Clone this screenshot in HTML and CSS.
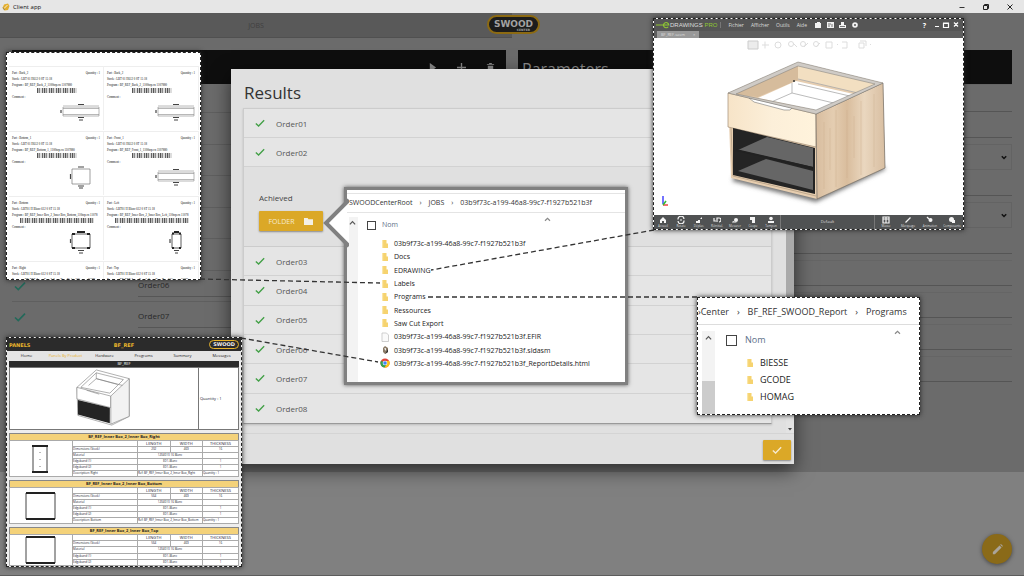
FILE: index.html
```html
<!DOCTYPE html>
<html lang="en">
<head>
<meta charset="utf-8">
<title>Client app</title>
<link rel="stylesheet" href="styles.css">
</head>
<body>
<svg class="sprite" aria-hidden="true">
  <symbol id="tick" viewBox="0 0 12 12"><path d="M1 6.500 4.300 9.600 11 2.600" fill="none" stroke="currentColor" stroke-width="1.600"/></symbol>
  <symbol id="folder" viewBox="0 0 8 10"><path d="M1 1h4.500v3.500H7V9H1z" fill="#f6d36f"/><path d="M1 1h1.200v8H1z" fill="#fbe6a6"/></symbol>
  <symbol id="up" viewBox="0 0 8 6"><path d="M1 4.500 4 1.500 7 4.500" fill="none" stroke="currentColor" stroke-width="1.400"/></symbol>
  <symbol id="wide" viewBox="0 0 40 20"><path d="M3 5h36v9H3zM3 6.500h36M3 12.500h36" fill="none" stroke="#888" stroke-width=".6"/><path d="M18 2.500h6M18 15.500h6M19 18h4M1 8v3" stroke="#444" stroke-width="1.200"/><path d="M3 3.500h36" stroke="#aaa" stroke-width=".4"/></symbol>
  <symbol id="square" viewBox="0 0 40 24"><path d="M12 4h18v15H12z" fill="none" stroke="#777" stroke-width=".7"/><path d="M18 2h6M18 21h6M19 23h4M10.500 9v5" stroke="#444" stroke-width="1.200"/></symbol>
  <symbol id="box" viewBox="0 0 40 24"><path d="M12 4h18v14H12z" fill="none" stroke="#333" stroke-width=".8"/><path d="M12 4h3M27 4h3M12 18h3M27 18h3M17 2h8" stroke="#222" stroke-width="1.800"/><path d="M18 20.500h6M19 23h4M10.500 9v4" stroke="#444" stroke-width="1.200"/></symbol>
  <symbol id="narrow" viewBox="0 0 40 24"><path d="M17 4h9v14h-9z" fill="none" stroke="#333" stroke-width=".8"/><path d="M17 3.500h2M24 3.500h2M17 18h2M24 18h2M19 2h5" stroke="#222" stroke-width="1.800"/><path d="M19 20.500h5M20 23h3M15 9v4" stroke="#444" stroke-width="1.200"/></symbol>
</svg>

<div class="desktop">
  <header class="titlebar">
    <svg class="app-icon" viewBox="0 0 8 8"><path d="M2 1.500 6 .5 7.500 3 6 7 2.500 7.500.5 5z" fill="#e3ae2d"/><path d="M2 5.500 5.500 2" stroke="#fff" stroke-width=".8"/><path d="M1 4.500 2.500 7" stroke="#665" stroke-width=".6"/></svg>
    <span class="app-name">Client app</span>
    <button class="win-btn" aria-label="Minimize"><svg viewBox="0 0 8 8"><path d="M1.500 4.500h5" stroke="#333"/></svg></button>
    <button class="win-btn" aria-label="Restore"><svg viewBox="0 0 8 8"><path d="M1.500 2.500h4v4h-4zM2.500 2.500v-1h4v4h-1" fill="none" stroke="#222"/></svg></button>
    <button class="win-btn" aria-label="Close"><svg viewBox="0 0 8 8"><path d="M1.500 1.500l5 5M6.500 1.500l-5 5" stroke="#222"/></svg></button>
  </header>

  <main class="app">
    <nav class="topbar">
      <div class="topbar-left"><a class="jobs" href="#jobs">JOBS</a></div>
      <div class="logo">SWOOD<small>CENTER</small></div>
    </nav>
    <div class="columns">
      <section class="pane">
        <div class="pane-head tools">
          <button aria-label="Run"><svg viewBox="0 0 10 10"><path d="M2 0v10l7-5z" fill="currentColor"/></svg></button>
          <button aria-label="Add"><svg viewBox="0 0 10 10"><path d="M5 0v10M0 5h10" stroke="currentColor" stroke-width="1.500"/></svg></button>
          <button aria-label="Delete"><svg viewBox="0 0 10 10"><path d="M1 1h2.500V0h3v1H9v1H1zM2 3h6v7H2z" fill="currentColor"/></svg></button>
        </div>
        <ul class="back-rows">
          <li></li><li></li><li></li><li></li><li></li>
          <li><svg class="tick"><use href="#tick"/></svg><span>Order06</span></li>
          <li><svg class="tick"><use href="#tick"/></svg><span>Order07</span></li>
        </ul>
      </section>
      <section class="pane">
        <div class="pane-head"><h2>Parameters</h2></div>
        <div class="fields">
          <input aria-label="Name"><input aria-label="Reference">
          <select aria-label="Type"></select><input aria-label="Length">
          <select aria-label="Machine"></select><input aria-label="Width">
          <input aria-label="Height"><input aria-label="Depth"><input aria-label="Stock"><input aria-label="Output">
        </div>
      </section>
    </div>
    <button class="edit" aria-label="Edit"><svg viewBox="0 0 14 14"><path d="M2 12v-2.200L9.200 2.600l2.200 2.200L4.200 12zM9.900 1.900l.8-.8 2.200 2.200-.8.8z" fill="currentColor"/></svg></button>
  </main>

  <section class="dialog" role="dialog" aria-labelledby="results">
    <h1 id="results">Results</h1>
    <div class="dialog-body">
      <div class="orders">
        <div class="order"><svg class="tick"><use href="#tick"/></svg>Order01</div>
        <div class="order"><svg class="tick"><use href="#tick"/></svg>Order02</div>
        <div class="detail">
          <p>Achieved</p>
          <button class="gold">FOLDER<svg viewBox="0 0 12 10"><path d="M1 1h4l1 1.500h5V9H1z" fill="#f4f0e4"/></svg></button>
        </div>
        <div class="order-group">
          <div class="order"><svg class="tick"><use href="#tick"/></svg>Order03</div>
          <div class="order"><svg class="tick"><use href="#tick"/></svg>Order04</div>
          <div class="order"><svg class="tick"><use href="#tick"/></svg>Order05</div>
          <div class="order"><svg class="tick"><use href="#tick"/></svg>Order06</div>
          <div class="order"><svg class="tick"><use href="#tick"/></svg>Order07</div>
          <div class="order"><svg class="tick"><use href="#tick"/></svg>Order08</div>
        </div>
      </div>
      <div class="scroll"><i></i><svg viewBox="0 0 6 4"><path d="M1 1h4L3 3.500z" fill="#444"/></svg></div>
    </div>
    <footer><button class="gold ok" aria-label="OK"><svg class="tick"><use href="#tick"/></svg></button></footer>
  </section>

  <section class="window labels">
    <article class="label"><p>Part : Back_2<b>Quantity : 1</b></p><p>Stock : LBT 01 H612 0 ST 15 18</p><p>Program : BF_REF_Back_2_1100top.cn 1107880</p><i class="bars"></i><p>Comment :</p><svg class="wide"><use href="#wide"/></svg></article>
    <article class="label"><p>Part : Back_2<b>Quantity : 1</b></p><p>Stock : LBT 01 H612 0 ST 15 18</p><p>Program : BF_REF_Back_2_1100top.cn 1107880</p><i class="bars"></i><p>Comment :</p><svg class="wide"><use href="#wide"/></svg></article>
    <article class="label"><p>Part : Bottom_1<b>Quantity : 1</b></p><p>Stock : LBT 01 H612 0 ST 15 18</p><p>Program : BF_REF_Bottom_1_1100top.cn 1107880</p><i class="bars"></i><p>Comment :</p><svg><use href="#square"/></svg></article>
    <article class="label"><p>Part : Front_1<b>Quantity : 1</b></p><p>Stock : LBT 01 H612 0 ST 15 18</p><p>Program : BF_REF_Front_1_1100top.cn 1107880</p><i class="bars"></i><p>Comment :</p><svg class="wide"><use href="#wide"/></svg></article>
    <article class="label"><p>Part : Bottom<b>Quantity : 1</b></p><p>Stock : LBT01 H Blanc 612 0 ST 15 18</p><p>Program : BF_REF_Inner Box_2_Inner Box_Bottom_110top.cn 11078</p><i class="bars long"></i><p>Comment :</p><svg><use href="#box"/></svg></article>
    <article class="label"><p>Part : Left<b>Quantity : 1</b></p><p>Stock : LBT01 H Blanc 612 0 ST 15 18</p><p>Program : BF_REF_Inner Box_2_Inner Box_Left_110top.cn 11078</p><i class="bars long"></i><p>Comment :</p><svg><use href="#narrow"/></svg></article>
    <article class="label"><p>Part : Right<b>Quantity : 1</b></p><p>Stock : LBT01 H Blanc 612 0 ST 15 18</p><p>Program : BF_REF_Inner Box_2_Inner Box_Right_110top.cn 11078</p></article>
    <article class="label"><p>Part : Top<b>Quantity : 1</b></p><p>Stock : LBT01 H Blanc 612 0 ST 15 18</p><p>Program : BF_REF_Inner Box_2_Inner Box_Top_110top.cn 11078</p></article>
  </section>

  <section class="window report">
    <header><span>PANELS</span><b>BF_REF</b><em>SWOOD</em></header>
    <nav><a href="#home">Home</a><a class="on" href="#panels">Panels By Product</a><a href="#hardware">Hardware</a><a href="#programs">Programs</a><a href="#summary">Summary</a><a href="#messages">Messages</a></nav>
    <h3>BF_REF</h3>
    <div class="hero">
      <svg viewBox="0 0 60 62"><g fill="#fff" stroke="#777" stroke-width=".6"><path d="M2 20 22 2 56 11v39L38 59 3 49z"/><path d="M2 20 37 29v12L2 32z"/><path d="M37 29 56 11v39L37 58z" fill="#f2f2f2"/><path d="M6 20 22 5 50 12 36 26z"/><path d="M14 18l8-7 22 6M22 5v6l27 7M12 23l13 4" fill="none"/></g><path d="M3 33 36 41v16L3 48z" fill="#242424"/></svg>
      <p>Quantity : 1</p>
    </div>
    <table><caption>BF_REF_Inner Box_2_Inner Box_Right</caption>
      <tr><td class="pic" rowspan="6"><svg viewBox="0 0 32 30"><path d="M8 2h14v26H8z" fill="#fff" stroke="#444"/><path d="M7 2h16M7 28h16" stroke="#222" stroke-width="2"/><path d="M15 8v1M15 15v1M15 22v1" stroke="#777"/></svg></td><td></td><th>LENGTH</th><th>WIDTH</th><th>THICKNESS</th></tr>
      <tr><td>Dimensions (Stock)</td><td class="c">202</td><td class="c">469</td><td class="c">16</td></tr>
      <tr><td>Material</td><td class="c" colspan="2">1204010 16 Blanc</td><td></td></tr>
      <tr><td>Edgeband (1)</td><td class="c" colspan="2">ED1-Blanc</td><td class="c">1</td></tr>
      <tr><td>Edgeband (2)</td><td class="c" colspan="2">ED1-Blanc</td><td class="c">1</td></tr>
      <tr><td>Description: Right</td><td colspan="2">Ref: BF_REF_Inner Box_2_Inner Box_Right</td><td>Quantity : 1</td></tr>
    </table>
    <table><caption>BF_REF_Inner Box_2_Inner Box_Bottom</caption>
      <tr><td class="pic" rowspan="6"><svg viewBox="0 0 32 30"><path d="M1 2h29v26H1z" fill="#fff" stroke="#444"/><path d="M1 2h29M1 28h29" stroke="#222" stroke-width="2"/></svg></td><td></td><th>LENGTH</th><th>WIDTH</th><th>THICKNESS</th></tr>
      <tr><td>Dimensions (Stock)</td><td class="c">564</td><td class="c">469</td><td class="c">16</td></tr>
      <tr><td>Material</td><td class="c" colspan="2">1204010 16 Blanc</td><td></td></tr>
      <tr><td>Edgeband (1)</td><td class="c" colspan="2">ED1-Blanc</td><td class="c">1</td></tr>
      <tr><td>Edgeband (2)</td><td class="c" colspan="2">ED1-Blanc</td><td class="c">1</td></tr>
      <tr><td>Description: Bottom</td><td colspan="2">Ref: BF_REF_Inner Box_2_Inner Box_Bottom</td><td>Quantity : 1</td></tr>
    </table>
    <table><caption>BF_REF_Inner Box_2_Inner Box_Top</caption>
      <tr><td class="pic" rowspan="5"><svg viewBox="0 0 32 30"><path d="M1 2h29v26H1z" fill="#fff" stroke="#444"/><path d="M1 2h29M1 28h29" stroke="#222" stroke-width="2"/></svg></td><td></td><th>LENGTH</th><th>WIDTH</th><th>THICKNESS</th></tr>
      <tr><td>Dimensions (Stock)</td><td class="c">564</td><td class="c">469</td><td class="c">16</td></tr>
      <tr><td>Material</td><td class="c" colspan="2">1204010 16 Blanc</td><td></td></tr>
      <tr><td>Edgeband (1)</td><td class="c" colspan="2">ED1-Blanc</td><td class="c">1</td></tr>
      <tr><td>Edgeband (2)</td><td class="c" colspan="2">ED1-Blanc</td><td class="c">1</td></tr>
    </table>
  </section>

  <section class="window drawing">
    <header>
      <svg class="mark" viewBox="0 0 16 8"><path d="M0 4h9M14 6a3 3 0 1 1 .6-2H9" fill="none" stroke="#8fc832" stroke-width="1.300"/></svg>
      <span class="brand">DRAWINGS <b>PRO</b></span>
      <a href="#fichier">Fichier</a><a href="#afficher">Afficher</a><a href="#outils">Outils</a><a href="#aide">Aide</a>
      <svg class="quick" viewBox="0 0 48 8"><g fill="#f2f2f2"><path d="M1 2h2V1h3v1h1v5H1z"/><path d="M13 1h7v6h-7z"/><path d="M27 1h3v3h2v3h-7V4h2z"/><circle cx="41" cy="4" r="2.800"/></g><path d="M14 3h3M14 5h2M18 3v3M26 5.500h5" stroke="#555" stroke-width=".8"/><circle cx="41" cy="4" r="1" fill="#555"/></svg>
      <span class="help">?</span>
      <svg class="controls" viewBox="0 0 28 8"><path d="M2 5.500h4M10.500 2.500h5v4h-5zM10 2h6M21 1.500l4 4M25 1.500l-4 4" fill="none" stroke="#fff" stroke-width="1.200"/></svg>
    </header>
    <div class="tab"><span>BF_REF.sasm</span><span>×</span></div>
    <div class="canvas">
      <svg viewBox="0 0 309 177" role="img" aria-label="Drawer unit">
        <defs>
          <linearGradient id="wood"><stop offset="0" stop-color="#d8bd9f"/><stop offset=".25" stop-color="#e4cdb1"/><stop offset=".45" stop-color="#d9bd9d"/><stop offset=".7" stop-color="#ead7bf"/><stop offset="1" stop-color="#d8bea1"/></linearGradient>
          <linearGradient id="pale"><stop offset="0" stop-color="#f7e4c8"/><stop offset=".5" stop-color="#fcefd9"/><stop offset="1" stop-color="#fff3dc"/></linearGradient>
          <filter id="soft"><feGaussianBlur stdDeviation="2"/></filter>
        </defs>
        <g fill="none" stroke="#ddd"><path d="M94 3h10v8H94z" fill="#ececec" stroke="#ccc"/><path d="M108 7h7M111 3.500v7M139 5l4 4M150 9l4-4M162 9l4-4"/><circle cx="124" cy="7" r="3"/><circle cx="137" cy="6" r="2.500"/><circle cx="149" cy="6" r="2.500"/><circle cx="162" cy="6" r="2.500"/><path d="M172 4h6v6h-6zM188 4h5v6h-5M205 5h5v5h-5zM206 3h6v5M183 6l1 1M216 6l1 1"/></g>
        <path d="M78 143 162 164 232 131 226 126 164 155 82 135z" fill="#777" filter="url(#soft)"/>
        <path d="M74 55 144 24 229 45 231 130 163 161 77 140z" fill="#e7ceb0"/>
        <path d="M75 55 144 26 144 42 104 59 84 57z" fill="#d6bc9c"/>
        <path d="M144 26 229 45 204 55 144 41z" fill="#f2dfc1"/>
        <path d="M104 60 142 43 204 57 166 73z" fill="#fff"/>
        <path d="M138 45v10l50 12M138 55 115 65M144 41l60 14M144 46l56 13" fill="none" stroke="#aaa" stroke-width=".8"/>
        <circle cx="140" cy="43" r="1" fill="#333"/>
        <path d="M74 55 162 76 162 109 74 89z" fill="url(#pale)" stroke="#a08d76" stroke-width=".7"/>
        <path d="M95 60 138 70 136 72 130 72 100 64z" fill="#fff" stroke="#777" stroke-width=".6"/>
        <path d="M162 76 229 45 231 130 163 161z" fill="url(#wood)" stroke="#6f6a64" stroke-width=".7"/>
        <path d="M170 84v67M182 72v77M193 72v68M207 63v74M220 56v73M176 90v42M200 78v42" stroke="#c8a988" stroke-width=".6" opacity=".6"/>
        <path d="M74 55 144 24 229 45 162 76zM82 56 144 28 221 46 162 72z" fill="#cfcbc6" fill-rule="evenodd" stroke="#7d7a76" stroke-width=".5"/>
        <path d="M77 90 79 138 162 158" fill="none" stroke="#bfa98e" stroke-width="1"/>
        <path d="M79 90 161 110 161 156 79 137z" fill="#242424"/>
        <path d="M84 112 113 99 159 110 159 129z" fill="#666"/>
        <path d="M84 133 112 121 159 133 159 152z" fill="#666"/>
        <path d="M82 112 159 130" stroke="#222" stroke-width="2"/>
        <path d="M9 158v8" stroke="#44f" stroke-width="1.500"/><path d="M9 167h5" stroke="#e44" stroke-width="1.500"/><path d="M9 167 12 163" stroke="#3b3" stroke-width="1.500"/>
      </svg>
    </div>
    <footer>
      <span><svg viewBox="0 0 8 8"><path d="M1 4 4 1l3 3v3H5V5H3v2H1z"/></svg>Accueil</span>
      <span><svg viewBox="0 0 8 8"><path d="M1 3.500A3 3 0 0 1 7 3M7 4.500A3 3 0 0 1 1 5M3 4h2" class="line"/></svg>Rotate</span>
      <span><svg viewBox="0 0 8 8"><path d="M1 7V5h2V4h2v3zM5 3l2-2v2z"/></svg>Déplac.</span>
      <span><svg viewBox="0 0 8 8"><path d="M1 2v3h2M4 6V2h2a1.500 1.500 0 0 1 0 4" class="line"/></svg>Réinitial.</span>
      <span><svg viewBox="0 0 8 8"><circle cx="5" cy="4" r="2"/><path d="M1 6.500h5L2 5z"/></svg>Mesurer</span>
      <span><svg viewBox="0 0 8 8"><path d="M1 1h5v6H3V4H1z"/></svg>Coupe</span>
      <span><svg viewBox="0 0 8 8"><circle cx="4" cy="2.500" r="1.800"/><path d="M1 7V5h6v2z"/></svg>Tampon</span>
      <span class="mid">Default</span>
      <span class="w"><svg viewBox="0 0 8 8"><path d="M1 1h6v6H1zM1 3h6M4 1v6" class="line"/></svg>Masse</span>
      <span class="w"><svg viewBox="0 0 8 8"><path d="M1.500 6.500 6.500 1.500" class="line"/></svg>Marquage</span>
      <span class="w"><svg viewBox="0 0 8 8"><circle cx="4.500" cy="4" r="2"/><path d="M1 1l2 2" class="line"/></svg>Animation</span>
      <span class="w"><svg viewBox="0 0 8 8"><circle cx="3.500" cy="3.500" r="2.500"/><path d="M4 4h3v3H4z"/></svg>Composants</span>
    </footer>
  </section>

  <section class="explorer">
    <svg class="pointer" viewBox="0 0 26 50"><path d="M26 2 3 25 26 48" fill="#fff" stroke="#808080" stroke-width="4"/></svg>
    <div class="crumbs"><span>SWOODCenterRoot</span><i>›</i><span>JOBS</span><i>›</i><span>03b9f73c-a199-46a8-99c7-f1927b521b3f</span></div>
    <div class="explorer-body">
      <div class="gutter"><svg><use href="#up"/></svg></div>
      <div class="listing">
        <label class="colhead"><input type="checkbox"><span>Nom</span><svg><use href="#up"/></svg></label>
        <ul class="files">
          <li><svg><use href="#folder"/></svg>03b9f73c-a199-46a8-99c7-f1927b521b3f</li>
          <li><svg><use href="#folder"/></svg>Docs</li>
          <li><svg><use href="#folder"/></svg>EDRAWING</li>
          <li><svg><use href="#folder"/></svg>Labels</li>
          <li><svg><use href="#folder"/></svg>Programs</li>
          <li><svg><use href="#folder"/></svg>Ressources</li>
          <li><svg><use href="#folder"/></svg>Saw Cut Export</li>
          <li><svg viewBox="0 0 8 10"><path d="M1 1h4.500L7.500 3v6.500H1z" fill="#fafafa" stroke="#bbb" stroke-width=".7"/></svg>03b9f73c-a199-46a8-99c7-f1927b521b3f.EFIR</li>
          <li><svg viewBox="0 0 8 10"><path d="M2 3 4 1l3 2v4L4 9 2 7z" fill="#8a7a66"/><path d="M3 3.500 5 3v3z" fill="#eee"/><path d="M4 9 7 7V4z" fill="#333"/></svg>03b9f73c-a199-46a8-99c7-f1927b521b3f.sldasm</li>
          <li><svg viewBox="0 0 10 10"><circle cx="5" cy="5" r="4.600" fill="#e2453a"/><path d="M1 2.800A4.600 4.600 0 0 0 4.600 9.600L6.800 6z" fill="#34a353"/><path d="M9.200 3A4.600 4.600 0 0 1 4.600 9.600L7 5.500 5 3z" fill="#fbc116"/><circle cx="5" cy="5" r="2.300" fill="#fff"/><circle cx="5" cy="5" r="1.800" fill="#4285f4"/></svg>03b9f73c-a199-46a8-99c7-f1927b521b3f_ReportDetails.html</li>
        </ul>
      </div>
    </div>
  </section>

  <section class="window programs">
    <div class="crumbs"><span>›Center</span><i>›</i><span>BF_REF_SWOOD_Report</span><i>›</i><span>Programs</span></div>
    <div class="explorer-body">
      <div class="gutter"><svg><use href="#up"/></svg><i></i></div>
      <div class="listing">
        <label class="colhead"><input type="checkbox"><span>Nom</span><svg><use href="#up"/></svg></label>
        <ul class="files">
          <li><svg><use href="#folder"/></svg>BIESSE</li>
          <li><svg><use href="#folder"/></svg>GCODE</li>
          <li><svg><use href="#folder"/></svg>HOMAG</li>
        </ul>
      </div>
    </div>
  </section>

  <svg class="links" width="1024" height="576" viewBox="0 0 1024 576" aria-hidden="true"><path d="M200 279 380 283M654 230 431 270M697 297H427M241 338 378 362" fill="none" stroke="#333" stroke-width="1.300" stroke-dasharray="5 3"/></svg>
</div>
</body>
</html>
```
FILE: styles.css
```css
* { box-sizing: border-box; }
body { margin: 0; font-family: "Open Sans", "Noto Sans", sans-serif; font-size: 8px; color: #444; }
h1, h2, h3, p, ul { margin: 0; padding: 0; font-weight: normal; }
ul { list-style: none; }
button, input, select { font: inherit; border: 0; padding: 0; margin: 0; background: none; }
a { color: inherit; text-decoration: none; }
.sprite { position: absolute; width: 0; height: 0; }

.desktop { position: relative; display: flex; flex-direction: column; min-height: 100vh; overflow: hidden; background: #808080; border-bottom: 1px solid #5c5c5c; }

.titlebar { display: flex; align-items: center; height: 13px; padding: 0 2px; background: #e6e6e6; color: #111; font-size: 6px; }
.app-icon { width: 8px; height: 8px; margin-right: 3px; }
.app-name { flex: 1; }
.win-btn { width: 24px; height: 12px; }
.win-btn svg { width: 8px; height: 8px; display: block; margin: auto; }

.app { flex: 1; display: flex; flex-direction: column; }
.topbar { position: relative; display: flex; height: 25px; background: #6b6b6b; }
.topbar-left { width: 50%; background: #595959; border-bottom: 1px solid #505050; text-align: center; line-height: 24px; }
.jobs { color: #404040; font-size: 7px; }
.logo { position: absolute; left: 50%; top: 2px; margin-left: -25px; width: 53px; height: 19px; border: 2px solid #8c6a12; border-radius: 10px; background: #1c1c1c; color: #a2a2a2; font: bold 9px/10px "DejaVu Sans", sans-serif; text-align: center; padding-top: 2px; }
.logo small { display: block; font-size: 3px; line-height: 3px; text-align: right; padding-right: 8px; }

.columns { display: grid; grid-template-columns: 1fr 1fr; gap: 12px; padding: 12px 12px 90px; background: #6b6b6b; }
.pane-head { height: 34px; background: #0e0e0e; color: #8c8c8c; }
.pane-head h2 { font-size: 16px; line-height: 38px; padding-left: 4px; }
.tools { display: flex; justify-content: flex-end; align-items: center; gap: 19px; padding-right: 10px; }
.tools button { width: 10px; height: 10px; color: #8c8c8c; }
.tools svg { width: 9px; height: 9px; display: block; }
.back-rows { display: grid; grid-auto-rows: 1fr; height: 249px; padding-top: 28px; }
.back-rows li { display: flex; align-items: flex-start; border-top: 1px solid #5f5f5f; color: #292929; font-size: 8px; }
.back-rows .tick { width: 12px; height: 12px; margin: 9px 0 0 2px; color: #23695a; }
.back-rows span { flex: 1; margin-left: 112px; line-height: 28px; border-bottom: 1px solid #565656; align-self: flex-start; height: 26px; }
.fields { display: grid; gap: 6px; }
.fields input { height: 25px; width: 100%; border-top: 1px solid #656565; border-bottom: 1px solid #555; }
.fields input:nth-child(1) { height: 28px; }
.fields input:nth-child(2), .fields input:nth-child(4), .fields input:nth-child(6) { height: 20px; border-top: 0; }
.fields input:nth-child(n+7) { height: 26px; }
.fields select { height: 26px; width: 100%; border: 1px solid #636363; appearance: none; background: url("data:image/svg+xml,%3Csvg xmlns='http://www.w3.org/2000/svg' viewBox='0 0 6 5'%3E%3Cpath d='M.8 1.200 3 3.500 5.200 1.200' fill='none' stroke='%23111' stroke-width='1.500'/%3E%3C/svg%3E") no-repeat right 4px center / 6px 5px; }
.edit { position: absolute; right: 12px; bottom: 11px; width: 30px; height: 30px; border-radius: 50%; background: #8a6a18; color: #aaa49a; box-shadow: 0 1px 4px #444; }
.edit svg { width: 13px; height: 13px; display: block; margin: auto; }

.dialog { position: absolute; left: 231px; top: 69px; width: 563px; display: flex; flex-direction: column; background: #e0e0e0; box-shadow: 0 6px 18px rgba(0,0,0,.6); }
.dialog h1 { font-size: 17px; line-height: 23px; padding: 12px 13px 4px; color: #333; }
.dialog-body { display: flex; justify-content: space-between; height: 326px; padding-left: 12px; border-bottom: 1px solid #d4d4d4; }
.orders { flex: 1; align-self: flex-start; border: 1px solid #ccc; border-bottom-color: #999; background: #e5e5e5; box-shadow: 0 1px 2px #bbb; }
.order { display: flex; align-items: center; height: 29px; padding-left: 11px; border-bottom: 1px solid #d2d2d2; font-size: 8px; color: #555; }
.order .tick { width: 10px; height: 10px; margin-right: 11px; color: #43a047; }
.detail { height: 80px; padding: 25px 0 0 15px; background: #e0e0e0; border-bottom: 1px solid #ccc; }
.detail p { line-height: 12px; margin-bottom: 7px; }
.order-group { display: grid; grid-auto-rows: 1fr; height: 176px; }
.order-group .order { height: auto; }
.order-group .order:last-child { border-bottom: 0; }
.gold { display: flex; align-items: center; justify-content: center; gap: 8px; width: 64px; height: 20px; background: #dba827; color: #f6ead0; font-size: 7px; border-radius: 1px; box-shadow: 0 1px 2px #888; }
.gold svg { width: 11px; height: 9px; }
.scroll { display: flex; flex-direction: column; justify-content: space-between; align-items: center; width: 8px; margin-left: 14px; background: #e3e3e3; }
.scroll i { width: 8px; height: 296px; background: #aaa; }
.scroll svg { width: 6px; height: 4px; margin-bottom: 2px; }
.dialog footer { display: flex; justify-content: flex-end; padding: 6px 3px 4px; }
.ok { width: 28px; }
.ok .tick { width: 10px; height: 10px; }

.window { position: absolute; overflow: hidden; background: #fff; border: 1px dashed #222; box-shadow: 0 0 5px #222; }

.labels { left: 6px; top: 52px; width: 195px; height: 228px; display: grid; grid-template-columns: repeat(2, minmax(0, 1fr)); grid-auto-rows: 64px; row-gap: 1px; padding: 13px 1px 0 2px; }
.label { padding: 3px 3px 0; border-top: 1px solid #eee; border-right: 1px solid #f0f0f0; font: 3px/6px "Liberation Serif", serif; color: #111; white-space: nowrap; }
.label p { display: flex; justify-content: space-between; }
.label b { font-weight: normal; }
.label svg { display: block; width: 40px; height: 24px; margin-left: auto; }
.label .wide { height: 20px; margin-top: 2px; }
.bars { display: block; width: 40px; height: 5px; margin: 0 auto 1px 25px; background: repeating-linear-gradient(90deg, #555 0 1px, #bbb 1px 2px, #888 2px 3px, #ddd 3px 5px, #666 5px 6px, #ccc 6px 7px); }
.long { width: 74px; margin-left: 8px; }

.report { left: 6px; top: 337px; width: 236px; height: 230px; padding: 0 2px; background: #eee; font-size: 4px; color: #223; }
.report header { display: grid; grid-template-columns: 1fr auto 1fr; align-items: center; height: 13px; margin: 0 -2px; padding: 0 2px; background: #2b2b2b; color: #e9b52b; font: bold 5px/8px "DejaVu Sans", sans-serif; }
.report em { justify-self: end; border: 1px solid #e9b52b; border-radius: 6px; padding: 0 3px; line-height: 7px; font-style: normal; color: #eee; }
.report nav { display: grid; grid-template-columns: repeat(6, 1fr); height: 10px; line-height: 10px; margin: 0 -2px; text-align: center; background: #e4e4e4; color: #222; white-space: nowrap; }
.report .on { color: #eab32e; }
.report h3 { height: 6px; background: #2b2b2b; color: #fff; text-align: center; font-size: 4px; line-height: 6px; }
.hero { display: grid; grid-template-columns: 1fr 40px; height: 63px; background: #fff; border: 1px solid #777; }
.hero svg { height: 60px; justify-self: center; }
.hero p { padding: 28px 0 0 1px; border-left: 1px solid #777; }
.report table { table-layout: fixed; width: 100%; margin-top: 3px; border-collapse: collapse; background: #fff; font-size: 3px; line-height: 5px; }
.report caption { background: #f4d27a; border: 1px solid #888; border-bottom: 0; line-height: 6px; font-weight: bold; font-size: 4px; color: #222; }
.report td, .report th { height: 6px; padding: 0; border: 1px solid #aaa; font-weight: normal; white-space: nowrap; }
.report th { font-size: 4px; }
.report tr:first-child > :nth-child(1) { width: 63px; }
.report tr:first-child > :nth-child(2) { width: 65px; }
.report tr:first-child > :nth-child(5) { width: 36px; }
.report .c { text-align: center; }
.pic svg { display: block; height: 30px; margin: auto; }

.drawing { left: 653px; top: 18px; width: 311px; height: 212px; display: flex; flex-direction: column; color: #ddd; font-size: 5px; }
.drawing header { display: flex; align-items: center; gap: 7px; height: 12px; padding: 0 2px; background: #555; }
.mark { width: 14px; height: 8px; }
.brand { margin: 0 0 0 -7px; padding-right: 3px; border-right: 1px solid #777; font-family: "Liberation Sans", sans-serif; font-size: 6px; white-space: nowrap; }
.brand b { font-weight: normal; color: #8fc832; }
.quick { width: 48px; height: 8px; }
.help { margin-left: auto; color: #fff; font-size: 7px; font-weight: bold; }
.controls { width: 28px; height: 8px; }
.tab { height: 7px; background: #5e5e5e; padding-left: 3px; line-height: 7px; font-size: 4px; }
.tab span { display: inline-block; height: 7px; padding: 0 4px; background: #999; }
.canvas { flex: 1; min-height: 0; }
.canvas svg { display: block; width: 100%; height: 100%; }
.drawing footer { display: flex; height: 14px; background: #505253; font-size: 3px; line-height: 4px; text-align: center; }
.drawing footer span { width: 18px; padding-top: 1px; white-space: nowrap; }
.drawing footer svg { display: block; width: 8px; height: 8px; margin: 0 auto; fill: #f4f4f4; }
.line { fill: none; stroke: #f4f4f4; stroke-width: 1.200; }
.drawing footer .mid { flex: 1; border: solid #777; border-width: 0 1px; line-height: 12px; font-size: 4px; }
.drawing footer .w { width: 22px; }

.explorer { position: absolute; left: 344px; top: 187px; width: 284px; height: 198px; display: flex; flex-direction: column; border: 3px solid #808080; background: #fff; box-shadow: 0 0 4px #555; }
.pointer { position: absolute; left: -24px; top: 8px; width: 26px; height: 50px; }
.crumbs { display: flex; gap: 7px; color: #333; white-space: nowrap; }
.crumbs i { font-style: normal; }
.explorer .crumbs { margin-top: 3px; padding: 0 2px; height: 20px; border: solid #e4e4e4; border-width: 1px 0; font-size: 7px; line-height: 18px; position: relative; }
.explorer-body { flex: 1; display: flex; }
.gutter { width: 11px; background: #f3f3f3; }
.explorer .gutter { margin-top: 4px; }
.gutter svg { display: block; width: 7px; height: 6px; margin: 3px auto; color: #555; }
.listing { flex: 1; }
.colhead { display: flex; align-items: center; gap: 6px; color: #5d7089; }
.colhead input { appearance: none; width: 9px; height: 9px; border: 1px solid #444; }
.colhead svg { width: 7px; height: 5px; color: #888; }
.explorer .colhead { padding: 5px 0 0 9px; font-size: 7px; line-height: 14px; }
.explorer .colhead svg { margin: -12px 0 0 140px; }
.files { display: grid; grid-auto-rows: 1fr; color: #222; white-space: nowrap; }
.files li { display: flex; align-items: center; gap: 4px; }
.files svg { width: 10px; height: 10px; }
.explorer .files { height: 133px; margin-top: 5px; padding-left: 22px; font-size: 7px; }

.programs { left: 697px; top: 297px; width: 223px; height: 118px; display: flex; flex-direction: column; }
.programs .crumbs { padding-left: 0; gap: 8px; font-size: 9px; line-height: 28px; height: 27px; border-bottom: 1px solid #ddd; }
.programs .gutter { margin: 6px 0 0 4px; width: 13px; display: flex; flex-direction: column; justify-content: space-between; }
.programs .gutter svg { margin: 4px auto; }
.programs .gutter i { height: 33px; background: #ccc; }
.programs .colhead { padding: 7px 0 0 11px; gap: 8px; font-size: 9px; line-height: 16px; }
.programs .colhead input { width: 11px; height: 11px; }
.programs .colhead svg { margin: -16px 0 0 120px; }
.programs .files { height: 51px; margin-top: 6px; padding-left: 30px; font-size: 9px; }
.programs .files li { gap: 5px; }

.links { position: absolute; left: 0; top: 0; pointer-events: none; }
```
